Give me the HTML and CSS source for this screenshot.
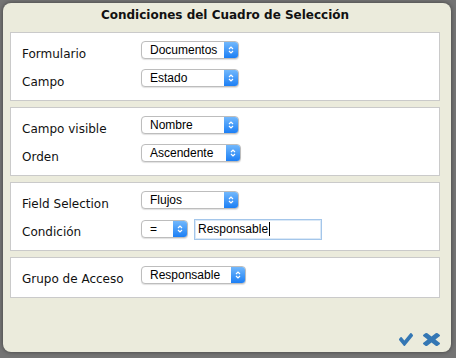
FILE: index.html
```html
<!DOCTYPE html>
<html lang="es">

<head>
  <meta charset="UTF-8" />
  <title>Condiciones del Cuadro de Selección</title>

  <link rel="stylesheet" href="styles.css">
</head>

<body>
  <div class="dialogo">
    <h1>Condiciones del Cuadro de Selección</h1>

    <div class="seccion">
      <div class="fila">
        <span class="etiqueta">Formulario</span>
        <div class="select sel-std"><span class="valor">Documentos</span><span class="flecha"><svg width="6" height="10" viewBox="0 0 6 10"><polyline points="1,4 3,2 5,4" /><polyline points="1,6 3,8 5,6" /></svg></span></div>
      </div>
      <div class="fila">
        <span class="etiqueta">Campo</span>
        <div class="select sel-std"><span class="valor">Estado</span><span class="flecha"><svg width="6" height="10" viewBox="0 0 6 10"><polyline points="1,4 3,2 5,4" /><polyline points="1,6 3,8 5,6" /></svg></span></div>
      </div>
    </div>

    <div class="seccion">
      <div class="fila">
        <span class="etiqueta">Campo visible</span>
        <div class="select sel-std"><span class="valor">Nombre</span><span class="flecha"><svg width="6" height="10" viewBox="0 0 6 10"><polyline points="1,4 3,2 5,4" /><polyline points="1,6 3,8 5,6" /></svg></span></div>
      </div>
      <div class="fila">
        <span class="etiqueta">Orden</span>
        <div class="select sel-orden"><span class="valor">Ascendente</span><span class="flecha"><svg width="6" height="10" viewBox="0 0 6 10"><polyline points="1,4 3,2 5,4" /><polyline points="1,6 3,8 5,6" /></svg></span></div>
      </div>
    </div>

    <div class="seccion">
      <div class="fila">
        <span class="etiqueta">Field Selection</span>
        <div class="select sel-std"><span class="valor">Flujos</span><span class="flecha"><svg width="6" height="10" viewBox="0 0 6 10"><polyline points="1,4 3,2 5,4" /><polyline points="1,6 3,8 5,6" /></svg></span></div>
      </div>
      <div class="fila">
        <span class="etiqueta">Condición</span>
        <div class="select sel-op"><span class="valor">=</span><span class="flecha"><svg width="6" height="10" viewBox="0 0 6 10"><polyline points="1,4 3,2 5,4" /><polyline points="1,6 3,8 5,6" /></svg></span></div>
        <div class="campo">Responsable<span class="cursor"></span></div>
      </div>
    </div>

    <div class="seccion">
      <div class="fila">
        <span class="etiqueta">Grupo de Acceso</span>
        <div class="select sel-grupo"><span class="valor">Responsable</span><span class="flecha"><svg width="6" height="10" viewBox="0 0 6 10"><polyline points="1,4 3,2 5,4" /><polyline points="1,6 3,8 5,6" /></svg></span></div>
      </div>
    </div>

    <div class="acciones">
      <svg class="ok" width="14" height="13" viewBox="121 334 1550 1188" preserveAspectRatio="none"><path d="M1671 566q0 40-28 68l-724 724-136 136q-28 28-68 28t-68-28l-136-136-362-362q-28-28-28-68t28-68l136-136q28-28 68-28t68 28l294 295 656-657q28-28 68-28t68 28l136 136q28 28 28 68z" /></svg>
      <svg class="cerrar" width="17" height="13" viewBox="302 366 1188 1188" preserveAspectRatio="none"><path d="M1490 1322q0 40-28 68l-136 136q-28 28-68 28t-68-28l-294-294-294 294q-28 28-68 28t-68-28l-136-136q-28-28-28-68t28-68l294-294-294-294q-28-28-28-68t28-68l136-136q28-28 68-28t68 28l294 294 294-294q28-28 68-28t68 28l136 136q28 28 28 68t-28 68l-294 294 294 294q28 28 28 68z" /></svg>
    </div>
  </div>
</body>

</html>
```

FILE: styles.css
```css
body {
  margin: 0;
  padding: 3px 5px 6px 3px;
  background-color: #747474;
  font-family: "DejaVu Sans", sans-serif;
  font-size: 12px;
}

.dialogo {
  box-sizing: border-box;
  width: 448px;
  height: 349px;
  padding: 5px 11px 0 7px;
  background-color: #ebebdc;
  border-radius: 8px;
  box-shadow: 0 0 4px rgba(0, 0, 0, 0.45);
  display: flex;
  flex-direction: column;
}

h1 {
  margin: 0 0 9px;
  font-size: 12px;
  line-height: 15px;
  text-align: center;
  color: #111;
}

.seccion {
  background-color: #fff;
  border: 1px solid #cacaca;
  padding: 8px 0 3px 11px;
  margin-bottom: 6px;
}

.fila {
  display: flex;
  align-items: flex-start;
  height: 28px;
}

.etiqueta {
  width: 119px;
  padding-top: 6px;
  line-height: 14px;
  color: #111;
}

.select {
  box-sizing: border-box;
  display: flex;
  height: 18px;
  border: 1px solid #bdbdbd;
  border-radius: 4px;
  background-color: #fff;
  box-shadow: 0 1px 1px rgba(0, 0, 0, 0.12);
  overflow: hidden;
  font-family: "Liberation Sans", sans-serif;
  font-size: 12px;
}

.sel-std {
  width: 98px;
}

.sel-orden {
  width: 100px;
}

.sel-grupo {
  width: 105px;
}

.sel-op {
  width: 47px;
  margin-top: 1px;
}

.valor {
  flex: 1;
  padding: 1px 0 0 8px;
  line-height: 15px;
  color: #000;
}

.flecha {
  width: 14px;
  display: flex;
  align-items: center;
  justify-content: center;
  background: linear-gradient(#72b8fc, #1c7ff5);
}

.flecha polyline {
  fill: none;
  stroke: #fff;
  stroke-width: 1.2;
}

.campo {
  box-sizing: border-box;
  width: 128px;
  height: 21px;
  margin-left: 6px;
  padding: 2px 0 0 3px;
  border: 1px solid #a4c6ea;
  box-shadow: inset 0 0 0 1px #dbe9f7;
  font-family: "Liberation Sans", sans-serif;
  font-size: 12px;
  line-height: 15px;
  color: #000;
}

.cursor {
  display: inline-block;
  width: 1px;
  height: 14px;
  margin-left: 1px;
  vertical-align: -3px;
  background-color: #000;
}

.acciones {
  margin-top: auto;
  padding-bottom: 6px;
  display: flex;
  justify-content: flex-end;
  align-items: flex-end;
  gap: 10px;
}

.acciones path {
  fill: #3477b4;
}
```
